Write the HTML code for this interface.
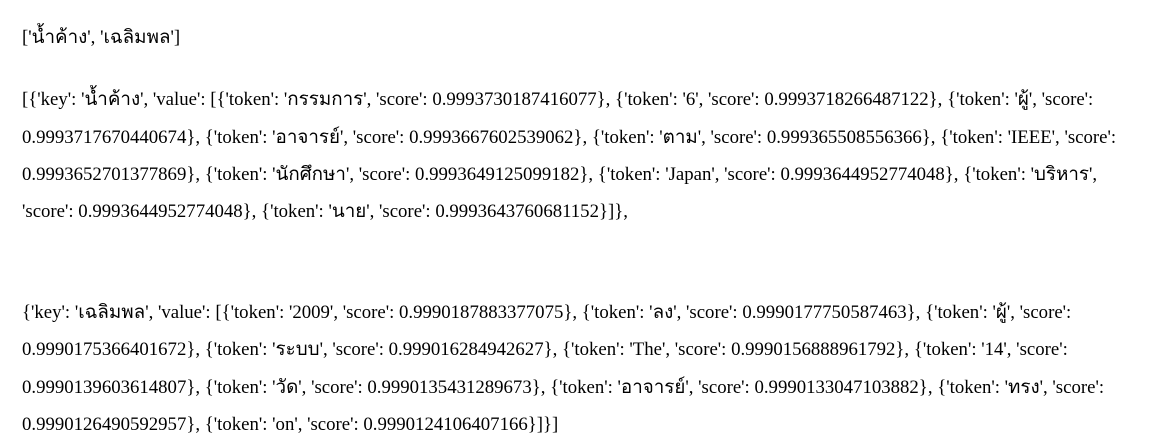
<!DOCTYPE html>
<html><head><meta charset="utf-8"><style>
body{margin:0;width:1167px;height:442px;background:#fff;overflow:hidden;font-family:"Liberation Serif","DejaVu Serif",serif;font-size:18.8px;color:#000}
.l{position:absolute;left:22px;white-space:nowrap;line-height:20px}
</style></head><body>
<div class="l" style="top:28px">['น้ำค้าง', 'เฉลิมพล']</div>
<div class="l" style="top:90px">[{'key': 'น้ำค้าง', 'value': [{'token': 'กรรมการ', 'score': 0.9993730187416077}, {'token': '6', 'score': 0.9993718266487122}, {'token': 'ผู้', 'score':</div>
<div class="l" style="top:128px">0.9993717670440674}, {'token': 'อาจารย์', 'score': 0.9993667602539062}, {'token': 'ตาม', 'score': 0.999365508556366}, {'token': 'IEEE', 'score':</div>
<div class="l" style="top:165px">0.9993652701377869}, {'token': 'นักศึกษา', 'score': 0.9993649125099182}, {'token': 'Japan', 'score': 0.9993644952774048}, {'token': 'บริหาร',</div>
<div class="l" style="top:202px">'score': 0.9993644952774048}, {'token': 'นาย', 'score': 0.9993643760681152}]},</div>
<div class="l" style="top:303px">{'key': 'เฉลิมพล', 'value': [{'token': '2009', 'score': 0.9990187883377075}, {'token': 'ลง', 'score': 0.9990177750587463}, {'token': 'ผู้', 'score':</div>
<div class="l" style="top:340px">0.9990175366401672}, {'token': 'ระบบ', 'score': 0.999016284942627}, {'token': 'The', 'score': 0.9990156888961792}, {'token': '14', 'score':</div>
<div class="l" style="top:378px">0.9990139603614807}, {'token': 'วัด', 'score': 0.9990135431289673}, {'token': 'อาจารย์', 'score': 0.9990133047103882}, {'token': 'ทรง', 'score':</div>
<div class="l" style="top:415px">0.9990126490592957}, {'token': 'on', 'score': 0.9990124106407166}]}]</div>
</body></html>
